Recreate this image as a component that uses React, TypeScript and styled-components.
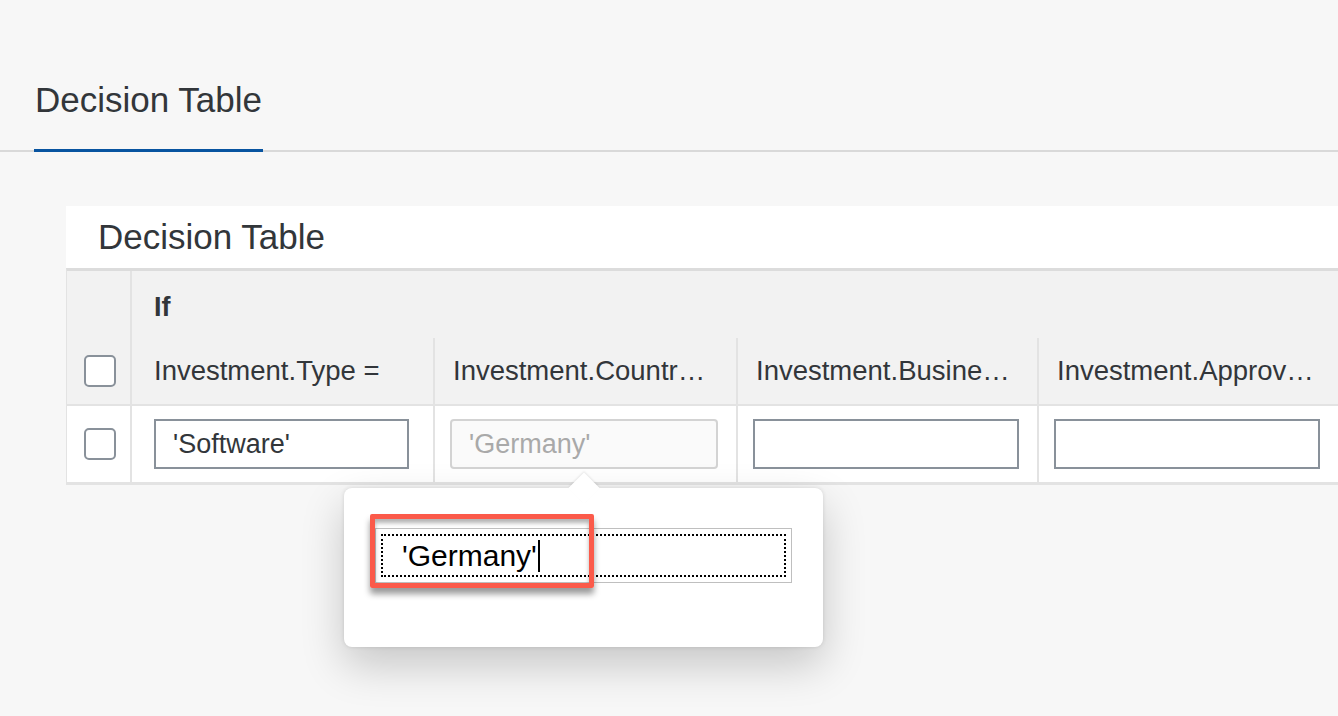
import React from 'react';
import styled, { createGlobalStyle } from 'styled-components';

const GlobalStyle = createGlobalStyle`
  html, body {
    margin: 0;
    padding: 0;
    background: #f7f7f7;
    overflow: hidden;
  }
  body {
    font-family: "Liberation Sans", Arial, sans-serif;
    color: #32363a;
  }
`;

const Page = styled.div`
  position: relative;
  width: 1338px;
  height: 716px;
  overflow: hidden;
`;

const TabBar = styled.div`
  display: flex;
  padding: 80px 0 0 34px;
  border-bottom: 2px solid #d9d9d9;
`;

const Tab = styled.div`
  font-size: 35px;
  line-height: 40px;
  padding: 0 1px 29px;
  border-bottom: 3px solid #0854a0;
  margin-bottom: -2px;
`;

const Panel = styled.section`
  margin: 54px 0 0 66px;
  width: 1310px;
  background: #fff;
`;

const PanelTitle = styled.h2`
  margin: 0;
  height: 62px;
  display: flex;
  align-items: center;
  padding-left: 32px;
  font-size: 35px;
  font-weight: normal;
  line-height: 40px;
`;

const Table = styled.div`
  display: grid;
  grid-template-columns: 65px 301px 303px 301px 301px;
  border-left: 1px solid #e3e3e3;
  border-top: 3px solid #dcdcdc;
  border-bottom: 3px solid #e3e3e3;
  background: #fff;
`;

const Corner = styled.div`
  grid-row: 1 / 3;
  grid-column: 1;
  background: #f2f2f2;
  border-right: 2px solid #e3e3e3;
  border-bottom: 2px solid #e3e3e3;
  display: flex;
  align-items: flex-end;
  justify-content: center;
  padding: 0 0 17px 3px;
`;

const IfCell = styled.div`
  grid-column: 2 / 6;
  height: 67px;
  box-sizing: border-box;
  background: #f2f2f2;
  display: flex;
  align-items: center;
  padding: 5px 0 0 22px;
  font-size: 27px;
  font-weight: bold;
`;

const LabelCell = styled.div<{ $first?: boolean }>`
  height: 66px;
  background: #f2f2f2;
  border-left: ${p => (p.$first ? 'none' : '2px solid #e3e3e3')};
  border-bottom: 2px solid #e3e3e3;
  padding-left: ${p => (p.$first ? '22px' : '18px')};
  display: flex;
  align-items: center;
  font-size: 27.5px;
  white-space: nowrap;
  overflow: hidden;
`;

const SelectCell = styled.div`
  height: 76px;
  border-right: 2px solid #e3e3e3;
  display: flex;
  align-items: center;
  justify-content: center;
  padding-left: 3px;
`;

const BodyCell = styled.div<{ $first?: boolean }>`
  height: 76px;
  border-left: ${p => (p.$first ? 'none' : '2px solid #e3e3e3')};
  display: flex;
  align-items: center;
  padding: ${p => (p.$first ? '0 24px 0 22px' : '0 18px 0 15px')};
`;

const Checkbox = styled.div`
  width: 32px;
  height: 32px;
  box-sizing: border-box;
  border: 2px solid #89919a;
  border-radius: 5px;
  background: #fff;
`;

const Field = styled.div<{ $disabled?: boolean }>`
  width: 100%;
  height: 50px;
  box-sizing: border-box;
  display: flex;
  align-items: center;
  padding: 0 17px;
  font-size: 27px;
  border: 2px solid ${p => (p.$disabled ? '#d3d3d3' : '#89919a')};
  border-radius: ${p => (p.$disabled ? '4px' : '0')};
  background: ${p => (p.$disabled ? '#fafafa' : '#fff')};
  color: ${p => (p.$disabled ? '#a9a9a9' : '#32363a')};
`;

const Popover = styled.div`
  position: absolute;
  left: 344px;
  top: 488px;
  width: 479px;
  height: 159px;
  box-sizing: border-box;
  padding: 40px 31px;
  background: #fff;
  border-radius: 8px;
  box-shadow: 0 18px 44px rgba(0, 0, 0, 0.2), 0 0 4px rgba(0, 0, 0, 0.12);

  &::before {
    content: '';
    position: absolute;
    left: 229px;
    top: -11px;
    width: 22px;
    height: 22px;
    background: #fff;
    transform: rotate(45deg);
    box-shadow: -1px -1px 2px rgba(0, 0, 0, 0.08);
  }
`;

const EditBox = styled.div`
  position: relative;
  width: 417px;
  height: 55px;
  box-sizing: border-box;
  border: 1px solid #bfbfbf;
  padding: 5px;
`;

const FocusRing = styled.div`
  height: 100%;
  box-sizing: border-box;
  border: 2px dotted #000;
  display: flex;
  align-items: center;
  padding-left: 19px;
  font-size: 30px;
  color: #000;
`;

const Caret = styled.span`
  display: inline-block;
  width: 2px;
  height: 32px;
  margin-left: 1px;
  background: #000;
`;

const Highlight = styled.div`
  position: absolute;
  left: 370px;
  top: 514px;
  width: 224px;
  height: 74px;
  box-sizing: border-box;
  border: 5px solid #fb5a4a;
  border-radius: 2px;
  box-shadow: 0 6px 6px rgba(0, 0, 0, 0.4), inset 0 4px 4px rgba(0, 0, 0, 0.3);
`;

const columns = [
  { label: 'Investment.Type =', value: "'Software'" },
  { label: 'Investment.Countr…', value: "'Germany'", disabled: true },
  { label: 'Investment.Busine…', value: '' },
  { label: 'Investment.Approv…', value: '' },
];

const App: React.FC = () => {
  return (
    <Page>
      <GlobalStyle />
      <TabBar>
        <Tab>Decision Table</Tab>
      </TabBar>
      <Panel>
        <PanelTitle>Decision Table</PanelTitle>
        <Table>
          <Corner>
            <Checkbox />
          </Corner>
          <IfCell>If</IfCell>
          {columns.map((c, i) => (
            <LabelCell key={c.label} $first={i === 0}>{c.label}</LabelCell>
          ))}
          <SelectCell>
            <Checkbox />
          </SelectCell>
          {columns.map((c, i) => (
            <BodyCell key={c.label} $first={i === 0}>
              <Field $disabled={c.disabled}>{c.value}</Field>
            </BodyCell>
          ))}
        </Table>
      </Panel>
      <Popover>
        <EditBox>
          <FocusRing>
            'Germany'<Caret />
          </FocusRing>
        </EditBox>
      </Popover>
      <Highlight />
    </Page>
  );
};

export default App;
